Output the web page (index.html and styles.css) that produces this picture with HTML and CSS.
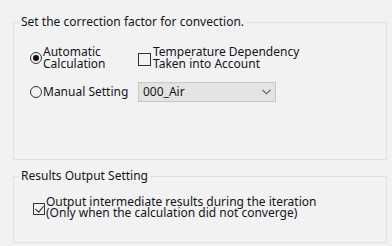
FILE: index.html
```html
<!DOCTYPE html>
<html>
<head>
  <title>Convection Settings</title>
  <link rel="stylesheet" href="styles.css">
</head>
<body>
  <fieldset class="group group-convection">
    <legend>Set the correction factor for convection.</legend>

    <div class="group-body">
      <div class="option-row">
        <label class="choice choice-radio">
          <input type="radio" name="mode" checked>
          <span>Automatic<br>Calculation</span>
        </label>
        <label class="choice choice-check">
          <input type="checkbox">
          <span>Temperature Dependency<br>Taken into Account</span>
        </label>
      </div>

      <div class="option-row second-row">
        <label class="choice choice-radio">
          <input type="radio" name="mode">
          <span>Manual Setting</span>
        </label>
        <div class="combo">
          <span class="combo-value">000_Air</span>
          <svg class="combo-arrow" width="9" height="6" viewBox="0 0 9 6">
            <polyline points="0.5,0.8 4.5,4.8 8.5,0.8" fill="none" stroke="#555" stroke-width="1.1"/>
          </svg>
        </div>
      </div>
    </div>
  </fieldset>

  <fieldset class="group group-output">
    <legend>Results Output Setting</legend>

    <div class="group-body">
      <label class="choice output-choice">
        <input type="checkbox" checked>
        <span>Output intermediate results during the iteration<br>(Only when the calculation did not converge)</span>
      </label>
    </div>
  </fieldset>
</body>
</html>
```

FILE: styles.css
```css
body {
  margin: 0;
  background-color: #f2f2f2;
  font-family: "Noto Sans", "Open Sans", sans-serif;
  font-size: 12px;
  color: #14141c;
}

.group {
  border: 1px solid #e0e0e0;
  margin: 0 5px 0 13px;
  padding: 0;
  min-width: 0;
}

.group legend {
  margin-left: 5px;
  padding: 0 2px;
  line-height: 16px;
}

.group-convection {
  margin-top: 14px;
}

.group-convection .group-body {
  padding: 16px 0 57px 16px;
}

.group-output {
  margin-top: 8px;
}

.group-output .group-body {
  padding: 12px 0 24px 19px;
}

.option-row {
  display: flex;
  align-items: center;
}

.second-row {
  margin-top: 12px;
}

.choice {
  display: flex;
  align-items: center;
  line-height: 12px;
}

.choice-radio {
  width: 108px;
}

.choice input {
  appearance: none;
  margin: 0 1px 0 0;
  flex: none;
  position: relative;
  background: transparent;
}

.choice input[type="radio"] {
  width: 12px;
  height: 12px;
  border: 1px solid #333;
  border-radius: 50%;
}

.choice input[type="radio"]:checked::after {
  content: "";
  position: absolute;
  left: 2px;
  top: 2px;
  width: 6px;
  height: 6px;
  border-radius: 50%;
  background: #111;
}

.choice input[type="checkbox"] {
  width: 13px;
  height: 13px;
  border: 1px solid #333;
  margin-right: 2px;
}

.choice input[type="checkbox"]:checked::after {
  content: "";
  position: absolute;
  left: 3px;
  top: 0px;
  width: 4px;
  height: 7px;
  border: solid #222;
  border-width: 0 1.5px 1.5px 0;
  transform: rotate(40deg);
}

.choice-check input {
  margin-top: 2px;
}

.output-choice {
  align-items: flex-start;
  line-height: 11px;
}

.output-choice input[type="checkbox"] {
  width: 12px;
  height: 12px;
  margin: 7px 1px 0 0;
}

.combo {
  display: flex;
  align-items: center;
  justify-content: space-between;
  box-sizing: border-box;
  width: 138px;
  height: 20px;
  padding: 0 4px 0 4px;
  background-color: #e3e3e3;
  border: 1px solid #c8c8c8;
}

.combo-value {
  line-height: 12px;
}
```
